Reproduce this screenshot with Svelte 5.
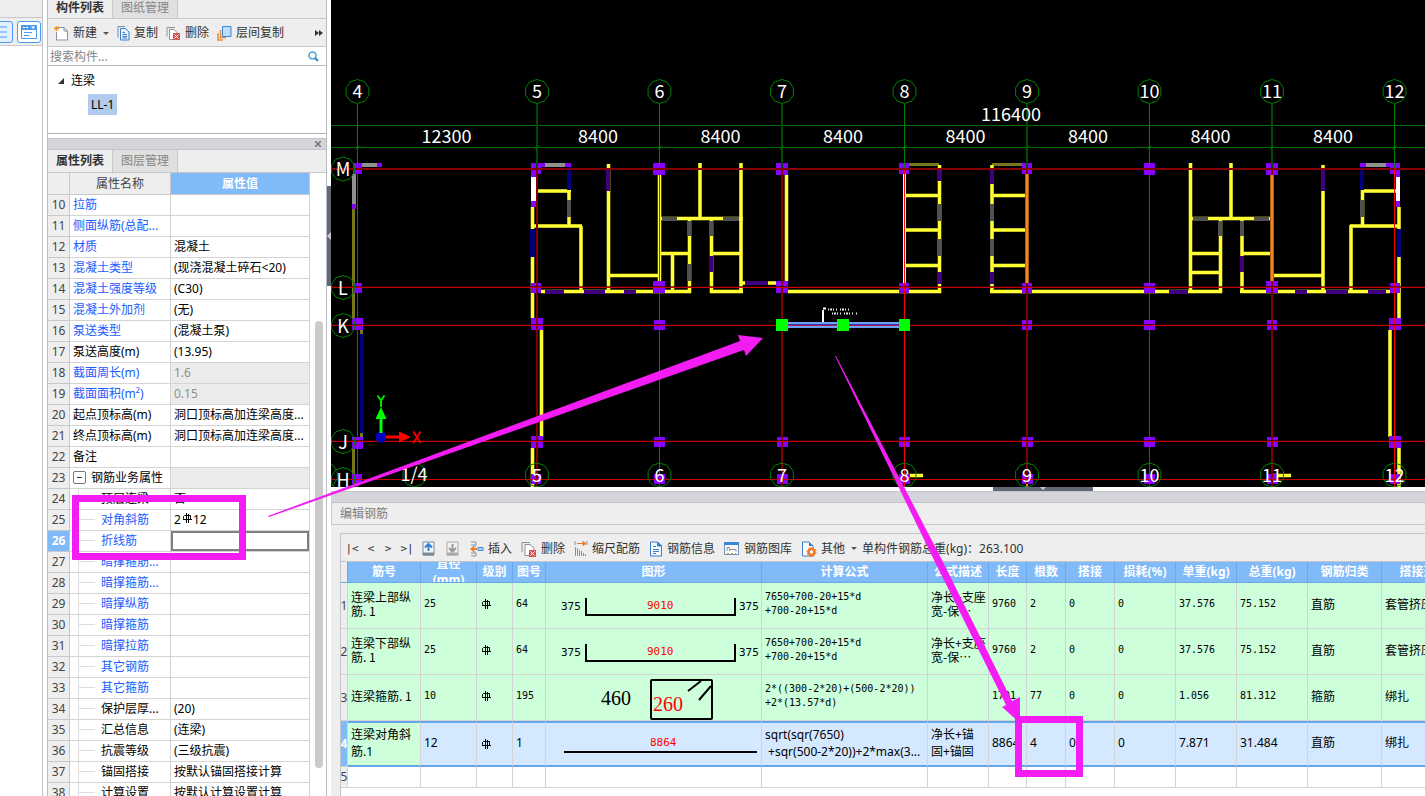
<script>
  const props = [
    [10, '拉筋', '', 'b'], [11, '侧面纵筋(总配...', '', 'b'], [12, '材质', '混凝土', 'b'],
    [13, '混凝土类型', '(现浇混凝土碎石<20)', 'b'], [14, '混凝土强度等级', '(C30)', 'b'],
    [15, '混凝土外加剂', '(无)', 'b'], [16, '泵送类型', '(混凝土泵)', 'b'],
    [17, '泵送高度(m)', '(13.95)', ''], [18, '截面周长(m)', '1.6', 'b ro'],
    [19, '截面面积(m²)', '0.15', 'b ro'], [20, '起点顶标高(m)', '洞口顶标高加连梁高度...', ''],
    [21, '终点顶标高(m)', '洞口顶标高加连梁高度...', ''], [22, '备注', '', ''],
    [23, '钢筋业务属性', '', 'group ro'], [24, '顶层连梁', '否', 'kid'],
    [25, '对角斜筋', '2#12', 'b kid'], [26, '折线筋', '', 'b kid sel'],
    [27, '暗撑箍筋...', '', 'b kid'], [28, '暗撑箍筋...', '', 'b kid'],
    [29, '暗撑纵筋', '', 'b kid'], [30, '暗撑箍筋', '', 'b kid'], [31, '暗撑拉筋', '', 'b kid'],
    [32, '其它钢筋', '', 'b kid'], [33, '其它箍筋', '', 'b kid'],
    [34, '保护层厚...', '(20)', 'kid'], [35, '汇总信息', '(连梁)', 'kid'],
    [36, '抗震等级', '(三级抗震)', 'kid'], [37, '锚固搭接', '按默认锚固搭接计算', 'kid'],
    [38, '计算设置', '按默认计算设置计算', 'kid']
  ];

  const heads = ['筋号', '直径\n(mm)', '级别', '图号', '图形', '计算公式', '公式描述', '长度', '根数', '搭接', '损耗(%)', '单重(kg)', '总重(kg)', '钢筋归类', '搭接形式'];
  const colWidths = [7, 73, 56, 36, 33, 216, 166, 61, 38, 39, 49, 61, 61, 71, 74, 84];
  const bars = [
    { n: 1, name: '连梁上部纵\n筋. 1', d: '25', no: '64', shape: 'u', f: '7650+700-20+15*d\n+700-20+15*d', desc: '净长+支座\n宽-保…', rest: ['9760', '2', '0', '0', '37.576', '75.152'], kind: '直筋', join: '套管挤压' },
    { n: 2, name: '连梁下部纵\n筋. 1', d: '25', no: '64', shape: 'u', f: '7650+700-20+15*d\n+700-20+15*d', desc: '净长+支座\n宽-保…', rest: ['9760', '2', '0', '0', '37.576', '75.152'], kind: '直筋', join: '套管挤压' },
    { n: 3, name: '连梁箍筋. 1', d: '10', no: '195', shape: 'box', f: '2*((300-2*20)+(500-2*20))\n+2*(13.57*d)', desc: '', rest: ['1701', '77', '0', '0', '1.056', '81.312'], kind: '箍筋', join: '绑扎' },
    { n: 4, name: '连梁对角斜\n筋.1', d: '12', no: '1', shape: 'line', f: 'sqrt(sqr(7650)\n +sqr(500-2*20))+2*max(3...', desc: '净长+锚\n固+锚固', rest: ['8864', '4', '0', '0', '7.871', '31.484'], kind: '直筋', join: '绑扎', sel: true }
  ];

  // plan geometry: axes
  const axes = [[357.5, '4', 0], [537, '5', 1], [659.5, '6', 0], [782, '7', 1], [904.5, '8', 0], [1027, '9', 1], [1149.5, '10', 0], [1272, '11', 1], [1394.5, '12', 0]];
  const rows = [['M', 169], ['L', 287.5], ['K', 325.5], ['J', 441.5], ['H', 479.5]];
  const dims = [446.5, 598, 720.5, 843, 965.5, 1088, 1210.5, 1333];
  const ring = (cx, cy) =>
    Array.from({ length: 10 }, (_, i) => {
      const a = (i * 36 - 90) * Math.PI / 180;
      return `${(cx + 12 * Math.cos(a)).toFixed(1)},${(cy + 12 * Math.sin(a)).toFixed(1)}`;
    }).join(' ');

  // walls: x1, y1, x2, y2
  const walls = [
    [532.5, 207, 532.5, 318], [541.5, 330, 541.5, 437], [532.5, 448, 532.5, 487],
    [536, 191, 571, 191], [569, 190, 569, 226], [534, 226, 582, 226], [581, 226, 581, 291],
    [608.5, 164, 608.5, 291], [608, 275.5, 659, 275.5], [541, 291.5, 691, 291.5], [659.5, 175, 659.5, 281],
    [661, 218.5, 743, 218.5], [689.5, 218, 689.5, 293], [661, 253.5, 689, 253.5], [672.5, 254, 672.5, 291],
    [700, 163, 700, 218], [741, 163, 741, 293], [711.5, 218, 711.5, 293], [711, 253.5, 741, 253.5],
    [710, 291.5, 743, 291.5], [741, 283, 776, 283], [786.5, 175, 786.5, 281], [788, 291.5, 941, 291.5],
    [939.5, 165, 939.5, 293], [904, 195.5, 939, 195.5], [904, 230, 939, 230], [904, 265.5, 939, 265.5],
    [992, 165, 992, 293], [992, 195.5, 1027, 195.5], [992, 230, 1027, 230], [992, 265.5, 1027, 265.5],
    [990, 291.5, 1222, 291.5], [1190.5, 163, 1190.5, 293], [1190, 218.5, 1272, 218.5], [1231, 163, 1231, 218],
    [1220.5, 218, 1220.5, 293], [1242, 218, 1242, 293], [1190, 253.5, 1220, 253.5], [1242, 253.5, 1272, 253.5],
    [1190, 272.5, 1220, 272.5], [1240, 291.5, 1390, 291.5], [1272, 275.5, 1323, 275.5], [1323, 165, 1323, 291],
    [1351, 225, 1351, 291], [1350, 226, 1400, 226], [1362.5, 190, 1362.5, 226], [1362, 191, 1396, 191],
    [1399, 207, 1399, 318], [1390, 330, 1390, 437], [1399, 448, 1399, 487],
    [904, 475.5, 923, 475.5], [1272, 475.5, 1291, 475.5]
  ];
  const olive = [[353.5, 209, 353.5, 318], [361.5, 330, 361.5, 437], [353.5, 448, 353.5, 475], [909, 164.5, 939, 164.5], [992, 164.5, 1023, 164.5]];
  // openings and posts: x, y, w, h
  const indigo = [
    [606, 169, 4, 22], [545, 290, 19, 4], [584, 290, 21, 4], [624, 290, 12, 4], [745, 281, 23, 4], [709, 256, 4, 16],
    [937, 169, 5, 12], [937, 272, 5, 12], [990, 169, 4, 15], [990, 272, 4, 12], [1169, 290, 19, 4], [1240, 256, 4, 16],
    [1295, 290, 12, 4], [1326, 290, 22, 4], [1368, 290, 18, 4], [1321, 169, 4, 22]
  ];
  const navy = [[530, 229, 5, 28], [567, 167, 4, 23], [360, 334, 4, 99], [1360, 167, 4, 23], [1397, 229, 4, 28]];
  const grey = [
    [567, 200, 4, 17], [662, 217, 15, 4], [723, 217, 16, 4], [687, 221, 4, 15], [687, 264, 4, 17], [709, 221, 4, 15],
    [937, 204, 5, 17], [937, 239, 5, 17], [990, 204, 4, 17], [990, 239, 4, 17], [1193, 217, 15, 4], [1254, 217, 15, 4],
    [1218, 221, 4, 15], [1240, 221, 4, 15], [1360, 200, 4, 17]
  ];
  const light = [[362, 163, 15, 4], [352, 174, 4, 30], [545, 163, 20, 4], [1366, 163, 20, 4]];
  const white = [[531, 177, 5, 24], [1396, 177, 4, 24]];
  const posts = [
    [353, 163, 9, 11], [377, 163, 5, 4], [352, 204, 4, 5], [353, 283, 9, 10], [352, 318, 11, 12], [352, 437, 11, 12], [352, 474, 10, 10],
    [531, 163, 10, 11], [541, 163, 4, 4], [565, 163, 6, 4], [531, 174, 5, 3], [531, 201, 5, 6], [531, 283, 10, 10], [531, 318, 12, 12], [531, 436, 12, 12], [531, 474, 10, 10],
    [653, 163, 12, 12], [653, 281, 12, 12], [776, 163, 12, 12], [776, 281, 12, 12],
    [899, 163, 10, 11], [899, 283, 10, 10], [1022, 163, 10, 11], [1022, 283, 10, 10],
    [1144, 163, 11, 12], [1144, 283, 11, 10], [1266, 163, 12, 12], [1266, 281, 12, 12],
    [654, 320, 11, 10], [1022, 320, 10, 10], [1144, 320, 11, 10], [1267, 320, 10, 10],
    ...[654, 777, 899, 1022, 1144, 1267].flatMap((x) => [[x, 437, 11, 10], [x, 474, 11, 10]]),
    [1360, 163, 6, 4], [1386, 163, 14, 4], [1390, 163, 10, 11], [1396, 174, 4, 3], [1396, 201, 4, 6], [1390, 283, 10, 10],
    [1389, 318, 12, 12], [1389, 436, 12, 12], [1390, 474, 10, 10]
  ];
</script>

{#snippet rebar()}
  <svg class="rebar" width="10" height="10" viewBox="0 0 10 10" role="img" aria-label="HRB400"><path d="M4.500 0V10M6.500 1V10M2.500 2.500H8.500V6.500M2.500 2.500L1.500 3.500V5.500L2.500 6.500M1 6.500H10" /></svg>
{/snippet}

{#snippet rects(list, cls)}
  {#each list as [x, y, w, h]}<rect class={cls} {x} {y} width={w} height={h} />{/each}
{/snippet}

<div class="app">
  <aside class="strip">
    <div class="strip-top"></div>
    <div class="strip-tools">
      <button aria-label="列表视图"><svg width="16" height="14"><path d="M0 2H14M0 7H14M0 12H14" stroke="#4a9df0" /></svg></button>
      <button aria-label="窗口视图"><svg width="16" height="14"><path d="M.5 .5H15.500V13.500H.500Z" fill="#fff" stroke="#4a9df0" /><path d="M0 0H16V5H0Z" fill="#4a9df0" /><path d="M2 2.500H4M5 2.500H7" stroke="#fff" /><path d="M10 1.500H14L12 4Z" fill="#fff" /><path d="M3 7.500H11M3 10.500H8" stroke="#4a9df0" /></svg></button>
    </div>
  </aside>

  <section class="side">
    <div class="tabs top"><button class="on">构件列表</button><button>图纸管理</button></div>
    <div class="tools">
      <button><svg width="15" height="15"><path d="M4 1.500H10L13.500 5V14H2.500V6" fill="#fff" stroke="#87929c" /><path d="M10 1.500V5H13.500" fill="none" stroke="#87929c" /><path d="M2.500 0V5M0 2.500H5M.5 .5L4.500 4.500M4.500 .5L.5 4.500" stroke="#f09a2c" /></svg>新建<i class="caret"></i></button>
      <button class="gap"><svg width="13" height="15"><path d="M1 11.500V.5H8" fill="none" stroke="#6c8fae" /><path d="M3.500 2.500H8.500L12 6V14H3.500Z" fill="#e9f2fd" stroke="#3b7fc8" /><path d="M5.500 6.500H8M5.500 8.500H10M5.500 10.500H10M5.500 12H10" stroke="#3b7fc8" /></svg>复制</button>
      <button class="gap"><svg width="15" height="15"><path d="M1 10.500V1.500H9" fill="none" stroke="#87929c" /><path d="M3.500 3.500H8L11.500 7V13.500H3.500Z" fill="#fff" stroke="#87929c" /><path d="M7 7H14V14H7Z" fill="#d9534f" /><path d="M8.500 8.500L12.500 12.500M12.500 8.500L8.500 12.500" stroke="#fff" /></svg>删除</button>
      <button class="gap"><svg width="15" height="15"><path d="M1 7V14H6M3.500 4V11.500H9" fill="none" stroke="#e88b3a" stroke-width="1.500" /><path d="M5.500 .5H14V10.500H5.500Z" fill="#bfdcfb" stroke="#3b86d8" /></svg>层间复制</button>
      <button class="more" aria-label="更多"><svg width="8" height="6"><path d="M0 0L4 3L0 6ZM4 0L8 3L4 6Z" fill="#333" /></svg></button>
    </div>
    <label class="search">
      <input type="text" placeholder="搜索构件..." aria-label="搜索构件" />
      <svg width="11" height="11"><circle cx="4.500" cy="4.500" r="3.500" fill="none" stroke="#4aa0d8" stroke-width="1.500" /><path d="M7 7L10 10" stroke="#2f86c4" stroke-width="2" /></svg>
    </label>
    <div class="tree">
      <div class="node"><svg width="6" height="6"><path d="M6 0V6H0Z" fill="#333" /></svg>连梁</div>
      <div class="leaf"><span>LL-1</span></div>
    </div>
    <div class="dock"><button aria-label="关闭"><svg width="6" height="6"><path d="M0 0L6 6M6 0L0 6" stroke="#707378" stroke-width="1.500" /></svg></button></div>
    <div class="tabs"><button class="on">属性列表</button><button>图层管理</button></div>
    <div class="props">
      <table>
        <colgroup><col class="c-num" /><col class="c-name" /><col /></colgroup>
        <thead><tr><th></th><th>属性名称</th><th class="val">属性值</th></tr></thead>
        <tbody>
          {#each props as [n, name, value, cls]}
            <tr class={cls}>
              <th>{n}</th>
              <td class="name">{#if cls.includes('group')}<span class="minus"></span>{/if}{name}</td>
              <td>{#if value === '2#12'}2{@render rebar()}12{:else}{value}{/if}</td>
            </tr>
          {/each}
        </tbody>
      </table>
      <div class="track"><div class="thumb"></div></div>
    </div>
  </section>

  <div class="vsplit"><span></span></div>

  <main>
    <svg class="cad" height="487" role="img" aria-label="平面图">
      <g transform="translate(-331 0)">
        <path class="dim" d="M331 125.500H1425M331 147.500H1425" />
        {#each olive as [a, b, c, d]}<path class="olive" d="M{a} {b}L{c} {d}" />{/each}
        {#each walls as [a, b, c, d]}<path class="wall-edge" d="M{a} {b}L{c} {d}" />{/each}
        {#each walls as [a, b, c, d]}<path class="wall" d="M{a} {b}L{c} {d}" />{/each}
        <path d="M904.500 174V283" stroke="#ffffb0" stroke-width="3" />
        {@render rects(indigo, 'indigo')}
        {@render rects(navy, 'navy')}
        {@render rects(grey, 'grey')}
        {@render rects(light, 'light')}
        {@render rects(white, 'white')}
        {@render rects(posts, 'post')}
        {#each axes as [x, , wide]}
          <path d="M{x} 104V168" stroke={wide ? '#004b00' : '#008000'} stroke-width={wide ? 2 : 1} />
          <path d="M{x} 168V487" stroke={wide ? '#800000' : '#ff0000'} stroke-width={wide ? 2 : 1} />
          <path d="M{x - 2} 149.500L{x + 2} 145.500" stroke="#008000" />
        {/each}
        <path d="M1027 174V283M1272 175V281" stroke="#a06010" stroke-width="4" />
        <path d="M1027 174V283M1272 175V281M1027 484V487" stroke="#ff8020" stroke-width="2" />
        <path d="M331 169H1425" stroke="#860000" stroke-width="2" />
        <path d="M331 286.500H1425M331 324.500H1425M331 440.500H1425" stroke="#400000" stroke-opacity=".7" />
        <path d="M331 287.500H1425M331 325.500H1425M331 441.500H1425M331 479.500H1425" stroke="#c80000" />
        {#each axes as [x, t]}
          <polygon class="ring" points={ring(x, 91.5)} /><text {x} y="98">{t}</text>
          {#if t !== '4'}<polygon class="ring" points={ring(x, 475)} /><text {x} y="482">{t}</text>{/if}
        {/each}
        {#each rows as [t, y]}<polygon class="ring" points={ring(343, y)} /><text x="343" y={y + 7}>{t}</text>{/each}
        <polygon class="ring" points={ring(326, 475)} />
        <polygon class="ring" points={ring(414.5, 475)} /><text x="414" y="481">1/4</text>
        {#each dims as x, i}<text {x} y="143">{i ? '8400' : '12300'}</text>{/each}
        <text x="1011" y="121">116400</text>
        <path d="M782 325H904" stroke="#6ea2f8" stroke-width="6" />
        <path d="M782 325H904" stroke="#3434a8" stroke-width="2" />
        <path d="M782 325.500H904" stroke="#b02050" />
        <path d="M776 319H788V331H776ZM837 319H849V331H837ZM899 319H910V331H899Z" fill="#00ff00" />
        <path d="M823 310V322M823 308.500H826" stroke="#fff" stroke-width="2" />
        <path d="M828 309.500H852M832 313.500H857" stroke="#eee" stroke-width="2" stroke-dasharray="1 1 2 1 1 2 1 3" />
        <circle cx="381" cy="437" r="5.500" fill="#0000c0" />
        <path d="M379.500 433V419H375.500L381 407L386.500 419H382.500V433Z" fill="#00ff00" />
        <path d="M386 435.500H399V431.500L411 437L399 442.500V438.500H386Z" fill="#ff0000" />
        <path d="M377.500 395.500L381 400.500L384.500 395.500M381 400.500V407" class="gy" />
        <path d="M413.500 431.500L420.500 443M420.500 431.500L413.500 443" class="gx" />
      </g>
    </svg>
    <div class="hsplit"><span></span></div>
    <div class="bar"></div>
    <h2>编辑钢筋</h2>
    <div class="panel">
      <div class="rtools">
        <button class="nav">|&lt;</button><button class="nav">&lt;</button><button class="nav">&gt;</button><button class="nav last">&gt;|</button>
        <button class="ico" aria-label="上移"><svg width="13" height="15"><path d="M1 1H12V14H1Z" fill="#f5f5f5" stroke="#7c8a96" /><path d="M1 13H12" stroke="#7c8a96" stroke-width="3" /><path d="M6.500 10V3M3 6.500L6.500 3L10 6.500" fill="none" stroke="#2f80dc" stroke-width="2" /></svg></button>
        <button class="ico" aria-label="下移"><svg width="13" height="15"><path d="M1 1H12V14H1Z" fill="#f2f2f2" stroke="#aaa" /><path d="M1 13H12" stroke="#aaa" stroke-width="3" /><path d="M6.500 3V10M3 7L6.500 10.500L10 7" fill="none" stroke="#999" stroke-width="2" /></svg></button>
        <button><svg width="14" height="16"><path d="M1 1H6V4H1M1 15H6V12H1M5 4V6M5 10V12" fill="none" stroke="#87929c" /><path d="M0 8L4 4.500V7H7V9H4V11.500Z" fill="#ee7b28" /><path d="M8 6.500H13V9.500H8Z" fill="#b9d8f8" stroke="#3b86d8" /></svg>插入</button>
        <button><svg width="16" height="16"><path d="M1 11V1.500H9" fill="none" stroke="#87929c" /><path d="M4 3.500H9L13 7V14.500H4Z" fill="#fff" stroke="#87929c" /><path d="M8 9H15V16H8Z" fill="#d9534f" /><path d="M9.500 10.500L13.500 14.500M13.500 10.500L9.500 14.500" stroke="#fff" /></svg>删除</button>
        <button><svg width="14" height="16"><path d="M1 0V4M13 0V4" stroke="#87929c" /><path d="M3 2.500H10M9 .5L12 2.500L9 4.500Z" stroke="#ee7b28" fill="#ee7b28" /><path d="M1.500 6V15M3.500 7V15M5.500 9V15M7.500 10V15M9.500 12V15M11.500 13V15" stroke="#87929c" /></svg>缩尺配筋</button>
        <button><svg width="14" height="16"><path d="M1.500 1H8.500L12.500 5V15H1.500Z" fill="#f4f9ff" stroke="#3b7fc8" /><path d="M8.500 1V5H12.500Z" fill="#3b7fc8" stroke="#3b7fc8" /><path d="M4 5.500H7M4 8.500H10M4 10.500H10M4 12.500H7" stroke="#3b7fc8" /></svg>钢筋信息</button>
        <button><svg width="16" height="14"><path d="M.5 .5H14.500V12.500H.500Z" fill="#f8f8f8" stroke="#6f93b8" /><path d="M0 0H15V3H0Z" fill="#3b86d8" /><path d="M3 9V5.500H5.500V7.500H12V9.500M5.500 7.500V9" fill="none" stroke="#87929c" /><path d="M3 11.500H12" stroke="#e0a030" stroke-dasharray="2 2" /></svg>钢筋图库</button>
        <button><svg width="16" height="16"><path d="M1.500 1H8L12 5V15H1.500Z" fill="#fff" stroke="#3b7fc8" /><path d="M8 1V5H12Z" fill="#3b7fc8" /><circle cx="10.500" cy="11" r="3" fill="#fff" stroke="#ee7b28" stroke-width="2.500" /><circle cx="10.500" cy="11" r="4.500" fill="none" stroke="#ee7b28" stroke-dasharray="2 1.500" /></svg>其他<i class="caret"></i></button>
        <span class="sum">单构件钢筋总重(kg)：263.100</span>
      </div>
      <div class="grid">
        <table>
          <colgroup>{#each colWidths as w}<col style="width:{w}px" />{/each}</colgroup>
          <thead><tr><th class="corner"></th>{#each heads as h}<th><div>{h}</div></th>{/each}</tr></thead>
          <tbody>
            {#each bars as r}
              <tr class:sel={r.sel}>
                <th><span>{r.n}</span></th>
                <td class="cn">{r.name}</td>
                <td>{r.d}</td>
                <td>{@render rebar()}</td>
                <td>{r.no}</td>
                <td class="draw">
                  <svg width="214" height={r.sel ? 42 : 44}>
                    {#if r.shape === 'u'}
                      <path d="M40 14V31H189V14" /><text x="15" y="26">375</text><text x="193" y="26">375</text><text class="red" x="101" y="25">9010</text>
                    {:else if r.shape === 'box'}
                      <rect x="105" y="4" width="61" height="39" rx="1" /><path d="M142 15L155 5M153 24L165 10" /><text class="big" x="55" y="29">460</text><text class="big red" x="107" y="35">260</text>
                    {:else}
                      <path d="M18 29H211" /><text class="red" x="104" y="23">8864</text>
                    {/if}
                  </svg>
                </td>
                <td>{r.f}</td>
                <td class="cn">{r.desc}</td>
                {#each r.rest as v}<td>{v}</td>{/each}
                <td class="cn">{r.kind}</td>
                <td class="cn">{r.join}</td>
              </tr>
            {/each}
            <tr class="empty"><th><span>5</span></th>{#each heads as _}<td></td>{/each}</tr>
          </tbody>
        </table>
      </div>
    </div>
  </main>

  <svg class="notes" width="1425" height="796" aria-hidden="true">
    <rect x="75.500" y="498.500" width="167" height="58" /><rect x="1018.500" y="719.500" width="61" height="54" />
    <path d="M268 516L740 341L738 335L763 338L746 356L744 350L269 517Z" />
    <path d="M835 356L836 356L942 560L1012 701L1020 697V723L1002 707L1006 705L934 560Z" />
  </svg>
</div>

<style>
  :global(body) { margin: 0; background: #fff; overflow: hidden; }
  .app { position: relative; display: flex; height: 100vh; overflow: hidden; font: 12px/20px "Noto Sans", "Noto Sans CJK SC", sans-serif; color: #333; }
  button { display: flex; align-items: center; border: 0; padding: 0; background: none; font: inherit; color: inherit; white-space: nowrap; }
  svg { display: block; flex: none; }
  table { border-collapse: separate; border-spacing: 0; table-layout: fixed; }
  th, td { padding: 0; box-sizing: border-box; overflow: hidden; }

  .strip { flex: none; width: 42px; margin-right: 4px; border-right: 1px solid #c2c4c8; overflow: hidden; }
  .strip-top { height: 17px; background: #eee; border-bottom: 1px solid #c6c8cb; }
  .strip-tools { display: flex; justify-content: flex-end; align-items: center; gap: 4px; height: 27px; padding-right: 1px; background: #eee; border-bottom: 1px solid #c6c8cb; }
  .strip-tools button { flex: none; justify-content: center; box-sizing: border-box; width: 24px; height: 22px; border: 1px solid #4a9df0; border-radius: 3px; background: #fff; }
  .strip-tools button:first-child { background: #e2effc; }

  .side { flex: none; display: flex; flex-direction: column; box-sizing: border-box; width: 280px; border: solid #b9bbbf; border-width: 0 1px; overflow: hidden; }
  .tabs { flex: none; display: flex; height: 22px; background: #eee; border-bottom: 1px solid #c6c8cb; }
  .tabs button { justify-content: center; width: 65px; height: 22px; box-sizing: border-box; border-right: 1px solid #c6c8cb; background: #e0e0e0; color: #868686; }
  .tabs .on { background: #eee; color: #333; font-weight: bold; }
  .tabs.top { height: 18px; }
  .tabs.top button { height: 18px; padding-bottom: 2px; line-height: 16px; }
  .tools { flex: none; display: flex; height: 26px; padding: 1px 0 0 6px; background: #eee; border-bottom: 1px solid #c6c8cb; }
  .tools svg { margin-right: 4px; }
  .tools .gap { margin-left: 8px; }
  .tools .more { margin-left: auto; }
  .tools .more svg { margin-right: 3px; }
  .caret { margin-left: 6px; border: 3px solid transparent; border-top-color: #555; border-bottom: 0; }
  .search { flex: none; display: flex; align-items: center; height: 18px; padding: 0 7px 0 2px; border-bottom: 1px solid #b9bbbf; }
  .search input { flex: 1; min-width: 0; height: 18px; border: 0; padding: 1px 0 0; box-sizing: border-box; outline: 0; background: none; font: inherit; }
  .search input::placeholder { color: #858585; opacity: 1; }
  .tree { flex: none; height: 67px; border-bottom: 1px solid #b0b2b6; color: #000; }
  .node { display: flex; align-items: center; gap: 7px; height: 24px; padding: 3px 0 0 10px; }
  .leaf { padding: 1px 0 0 40px; }
  .leaf span { display: inline-block; height: 21px; padding: 0 3px; background: #b0cbed; line-height: 21px; }
  .dock { flex: none; display: flex; justify-content: flex-end; align-items: center; height: 10px; margin-top: 4px; padding-right: 5px; border: solid #c2c4c8; border-width: 1px 0; background: #d4d5da; }

  .props { display: flex; flex: 1; min-height: 0; overflow: hidden; }
  .props table { flex: none; width: 262px; height: max-content; }
  .c-num { width: 22px; }
  .c-name { width: 101px; }
  .props th, .props td { height: 21px; border: solid #d4d4d4; border-width: 0 1px 1px 0; line-height: 20px; white-space: nowrap; }
  .props th { background: #eee; color: #444; font-weight: normal; border-color: #c6c8cb; }
  .props thead th { height: 22px; }
  .props .val { background: #80baf9; color: #fff; font-weight: bold; }
  .props td { position: relative; padding-left: 3px; color: #000; }
  .props .b .name { color: #1a5cff; }
  .props .ro td:last-child { background: #ebebeb; color: #8e8e8e; }
  .props .kid .name { padding-left: 31px; background: linear-gradient(#ddd, #ddd) 8px 0 / 1px 100% no-repeat, linear-gradient(#ddd, #ddd) 9px 9px / 16px 1px no-repeat; }
  .props .sel th { background: #80baf9; color: #fff; font-weight: bold; }
  .props .sel td:last-child { box-shadow: inset 0 0 0 2px #808080; }
  .minus { display: inline-block; box-sizing: border-box; width: 13px; height: 13px; margin-right: 5px; border: 1px solid #777; border-radius: 2px; vertical-align: -2px; background: linear-gradient(#333, #333) center / 5px 1px no-repeat; }
  .track { flex: 1; }
  .thumb { width: 8px; height: 447px; margin: 148px 0 0 5px; border-radius: 4px; background: #cbcbcb; }
  .rebar { display: inline-block; margin: 0 1px; vertical-align: -2px; fill: none; stroke: #000; }
  .props .rebar { vertical-align: 1px; }

  .vsplit { flex: none; width: 4px; padding-top: 186px; background: #fff; }
  .vsplit span { position: relative; display: block; height: 100px; background: #606975; }
  .vsplit span::after { content: ""; position: absolute; top: 46px; left: 0; border: 4px solid transparent; border-right-color: #c8ccd2; border-left: 0; }

  main { flex: 1; min-width: 0; display: flex; flex-direction: column; background: #eee; }
  .cad { width: 100%; background: #000; fill: none; }
  .cad text { fill: #fff; font: 18px "Noto Sans CJK SC", sans-serif; text-anchor: middle; }
  .dim { stroke: #007000; }
  .ring { stroke: #008000; }
  .wall-edge { stroke: #8c8c1c; stroke-width: 4; }
  .wall { stroke: #ffff33; stroke-width: 3; }
  .olive { stroke: #77771c; stroke-width: 3; }
  .indigo { fill: #400080; }
  .navy { fill: #000078; }
  .grey { fill: #505050; }
  .light { fill: #909090; }
  .white { fill: #fff; }
  .post { fill: #8800ff; }
  .gy { stroke: #00e000; stroke-width: 2; }
  .gx { stroke: #f00000; stroke-width: 2; }
  .hsplit { flex: none; display: flex; justify-content: center; height: 4px; background: #fff; }
  .hsplit span { position: relative; width: 100px; margin-left: 330px; background: #606975; }
  .hsplit span::after { content: ""; position: absolute; left: 47px; border: 3px solid transparent; border-top-color: #c8ccd2; border-bottom: 0; }
  .bar { flex: none; height: 10px; border: solid #c2c4c8; border-width: 1px 0; background: #d4d5da; }
  h2 { flex: none; height: 21px; margin: 0; padding-left: 8px; border: solid #c6c8cb; border-width: 0 0 1px 1px; font: inherit; line-height: 22px; color: #7d7d7d; }
  .panel { flex: 1; min-height: 0; margin: 8px 0 0 9px; border: solid #c2c4c8; border-width: 1px 0 0 1px; overflow: hidden; }
  .rtools { display: flex; align-items: center; gap: 9px; height: 25px; border-bottom: 1px solid #c2c4c8; padding: 2px 0 0 5px; }
  .rtools svg { margin-right: 4px; }
  .rtools .ico { margin-right: -2px; }
  .rtools .nav { justify-content: center; width: 8px; font: 11px "DejaVu Sans Mono", monospace; }
  .rtools .nav:first-child, .rtools .last { width: 12px; }
  .rtools .sum { margin-left: -4px; white-space: nowrap; }
  .grid { height: 100%; background: #fff; overflow: hidden; }
  .grid table { width: 1125px; }
  .grid th, .grid td { border: solid #d2d4d4; border-width: 0 1px 1px 0; }
  .grid thead th { height: 21px; border-color: #6aa8ea; background: #80baf9; color: #fff; }
  .grid thead div { display: flex; align-items: center; justify-content: center; height: 20px; overflow: hidden; line-height: 16px; text-align: center; white-space: pre; }
  .grid thead .corner { background: #eee; }
  .grid tbody th { background: #eee; color: #444; font-weight: normal; }
  .grid th span { display: flex; justify-content: center; width: 6px; }
  .grid tbody td { height: 46px; padding: 0 0 3px 3px; background: #ccffda; color: #000; font: 10px/14px "DejaVu Sans Mono", "Noto Sans CJK SC", monospace; white-space: pre; }
  .grid tbody td.cn { font: 12px/14px "Noto Sans CJK SC", sans-serif; }
  .grid tbody .sel td { border-top: 2px solid #64a6e8; border-bottom: 2px solid #64a6e8; background: #d4e9ff; font: 12px/17px "Noto Sans", "Noto Sans CJK SC", sans-serif; }
  .grid tbody .sel td:nth-child(2) { background: #ccffda; }
  .grid tbody .sel th { background: #80baf9; color: #fff; font-weight: bold; }
  .grid tbody .empty td { height: 21px; padding: 0; background: #fff; }
  .grid tbody td.draw { padding: 0; }
  .draw svg { fill: none; stroke: #000; stroke-width: 2; }
  .draw text { fill: #000; stroke: none; font: 11px "DejaVu Sans Mono", monospace; }
  .draw .big { font: 20px "Liberation Serif", serif; }
  .draw .red { fill: #f00; }

  .notes { position: absolute; left: 0; top: 0; pointer-events: none; fill: #f31cf3; }
  .notes rect { fill: none; stroke: #f31cf3; stroke-width: 7; }
</style>
